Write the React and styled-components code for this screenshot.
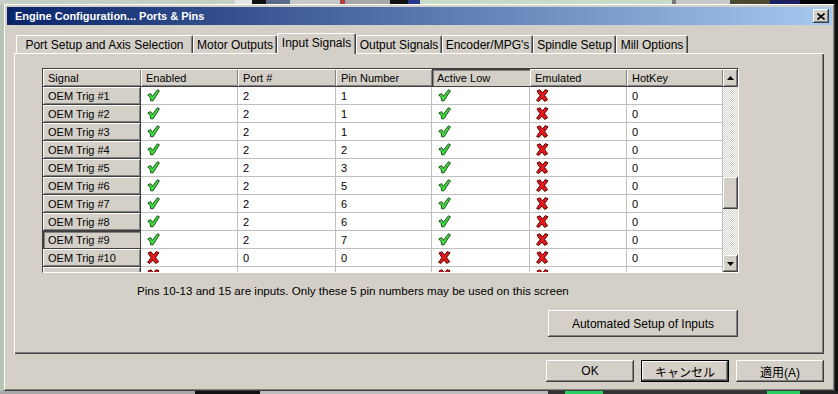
import React from 'react';
import styled, { createGlobalStyle, css } from 'styled-components';

const face = '#d4d0c8';
const shadow = '#808080';
const darkShadow = '#404040';
const gridLine = '#c0c0c0';

const GlobalStyle = createGlobalStyle`
  html, body { margin: 0; padding: 0; }
  body {
    width: 838px;
    height: 394px;
    overflow: hidden;
    font-family: "Liberation Sans", "Noto Sans CJK JP", sans-serif;
    font-size: 11px;
    color: #000;
    background:
      linear-gradient(to right, #c4d0c4 0 235px, #e6e6e6 235px 252px, #111 252px 266px, #5a6a8a 266px 290px, #c8c8c8 290px 340px, #b04040 340px 345px, #a8a8a8 345px 390px, #111 390px 408px, #2a3a8a 408px 420px, #c6dcc6 420px 672px, #777 672px 676px, #c8c8c8 676px 730px, #4a4a30 730px 770px, #1c2060 770px 800px, #000 800px) top / 100% 4px no-repeat,
      linear-gradient(to right, #a8a8a8 0 195px, #111 195px 260px, #bdbdbd 260px 548px, #333 548px 565px, #2ad060 565px 603px, #333 603px 767px, #2ad060 767px 800px, #222 800px) bottom / 100% 3px no-repeat,
      linear-gradient(to right, #b8c4b8 0 835px, #101010 835px);
  }
`;

const raised = css`
  box-shadow: inset -1px -1px ${darkShadow}, inset 1px 1px #fff, inset -2px -2px ${shadow};
`;

const Window = styled.div`
  box-sizing: border-box;
  width: 831px;
  height: 387px;
  margin: 4px 0 0 4px;
  padding: 3px;
  background: ${face};
  display: flex;
  flex-direction: column;
  ${raised};
`;

const TitleBar = styled.div`
  height: 18px;
  display: flex;
  align-items: center;
  justify-content: space-between;
  padding: 0 3px 0 8px;
  background: linear-gradient(to right, #0a246a, #a6caf0);
  color: #fff;
  font-weight: bold;
  font-size: 11px;
`;

const CloseButton = styled.div`
  width: 16px;
  height: 14px;
  display: flex;
  align-items: center;
  justify-content: center;
  background: ${face};
  ${raised};
`;

const Body = styled.div`
  flex: 1;
  display: flex;
  flex-direction: column;
  padding: 0 8px 0 7px;
`;

const TabStrip = styled.div`
  display: flex;
  align-items: flex-end;
  height: 20px;
  margin-top: 8px;
  padding-left: 2px;
`;

const Tab = styled.div`
  box-sizing: border-box;
  width: ${p => p.w}px;
  height: ${p => (p.active ? 21 : 18)}px;
  margin-bottom: ${p => (p.active ? -1 : 0)}px;
  display: flex;
  align-items: center;
  justify-content: center;
  padding-bottom: ${p => (p.active ? 3 : 0)}px;
  font-size: 12px;
  white-space: nowrap;
  background: ${face};
  border-radius: 2px 2px 0 0;
  border-top: 1px solid #fff;
  border-left: 1px solid #fff;
  border-right: 1px solid ${darkShadow};
  box-shadow: inset -1px 0 ${shadow};
  position: relative;
  z-index: ${p => (p.active ? 2 : 0)};
`;

const Panel = styled.div`
  box-sizing: border-box;
  height: 301px;
  padding: 15px 0 0 28px;
  display: flex;
  flex-direction: column;
  box-shadow: inset 1px 1px #fff, inset -1px -1px ${darkShadow}, inset -2px -2px ${shadow};
`;

const GridBox = styled.div`
  box-sizing: border-box;
  width: 697px;
  height: 205px;
  display: flex;
  border-top: 1px solid ${darkShadow};
  border-left: 1px solid ${darkShadow};
  border-right: 1px solid #fff;
  border-bottom: 1px solid #fff;
`;

const Table = styled.div`
  width: 680px;
  display: flex;
  flex-direction: column;
`;

const TableBody = styled.div`
  height: 185px;
  overflow: hidden;
  background: #fff;
`;

const Row = styled.div`
  display: grid;
  grid-template-columns: 98px 97px 98px 96px 98px 97px 96px;
  height: 18px;
`;

const HeaderCell = styled.div`
  display: flex;
  align-items: center;
  padding-left: 5px;
  background: ${face};
  box-shadow: ${p => (p.pressed
    ? `inset 1px 1px ${darkShadow}, inset 2px 2px ${shadow}`
    : `inset 1px 1px #fff, inset -1px -1px ${shadow}`)};
  border-right: 1px solid ${darkShadow};
  border-bottom: 1px solid ${darkShadow};
  margin-right: -1px;
`;

const RowHead = styled.div`
  display: flex;
  align-items: center;
  padding-left: 5px;
  background: ${face};
  box-shadow: ${p => (p.pressed
    ? `inset 1px 1px ${darkShadow}, inset 2px 2px ${shadow}`
    : `inset 1px 1px #fff, inset -1px -1px ${shadow}`)};
  border-right: 1px solid ${darkShadow};
  border-bottom: 1px solid ${darkShadow};
`;

const Cell = styled.div`
  display: flex;
  align-items: center;
  padding-left: ${p => (p.icon ? 6 : 5)}px;
  border-right: 1px solid ${gridLine};
  border-bottom: 1px solid ${gridLine};
`;

const ScrollBar = styled.div`
  width: 17px;
  display: flex;
  flex-direction: column;
`;

const ArrowButton = styled.div`
  box-sizing: border-box;
  height: ${p => p.h}px;
  display: flex;
  align-items: center;
  justify-content: center;
  background: ${face};
  ${raised};
`;

const Track = styled.div`
  flex: 1;
  background: repeating-conic-gradient(${face} 0 25%, #fff 0 50%) 0 0 / 2px 2px;
  padding-top: 90px;
`;

const Thumb = styled.div`
  height: 32px;
  background: ${face};
  ${raised};
`;

const Note = styled.div`
  margin: 11px 0 0 95px;
  font-size: 11.6px;
  line-height: 14px;
`;

const Button = styled.div`
  box-sizing: border-box;
  width: ${p => p.w}px;
  height: ${p => p.h}px;
  display: flex;
  align-items: center;
  justify-content: center;
  font-size: 12px;
  background: ${face};
  ${raised};
  ${p => p.isDefault && css`
    border: 1px solid #000;
  `}
`;

const AutoButton = styled(Button)`
  margin: 12px 0 0 506px;
`;

const ButtonRow = styled.div`
  display: flex;
  justify-content: flex-end;
  gap: 7px;
  margin-top: 6px;
`;

const Check = () => (
  <svg width="13" height="13" viewBox="0 0 13 13">
    <polygon
      points="0.8,6 3.6,4.6 5.4,7.4 10.4,0.8 12.4,1.8 6,11.8 3.6,11.8 3.2,8.6"
      fill="#3ce03c"
      stroke="#1d4f1d"
      strokeWidth="1"
      strokeLinejoin="round"
    />
  </svg>
);

const Cross = () => (
  <svg width="13" height="13" viewBox="0 0 13 13">
    <polygon
      points="1,2 4,0.8 6.5,4 9.2,0.6 12,1.8 8.6,6.4 11.6,10.8 8.6,12.4 6,9 3,12.4 0.6,11.4 4,6.6"
      fill="#e01a1a"
      stroke="#5e0000"
      strokeWidth="1"
      strokeLinejoin="round"
    />
  </svg>
);

const Flag = ({ on }) => (on ? <Check /> : <Cross />);

const tabs = [
  { label: 'Port Setup and Axis Selection', w: 177 },
  { label: 'Motor Outputs', w: 84 },
  { label: 'Input Signals', w: 79, active: true },
  { label: 'Output Signals', w: 86 },
  { label: "Encoder/MPG's", w: 91 },
  { label: 'Spindle Setup', w: 83 },
  { label: 'Mill Options', w: 72 },
];

const columns = ['Signal', 'Enabled', 'Port #', 'Pin Number', 'Active Low', 'Emulated', 'HotKey'];

const signals = [
  { enabled: true, port: 2, pin: 1, low: true },
  { enabled: true, port: 2, pin: 1, low: true },
  { enabled: true, port: 2, pin: 1, low: true },
  { enabled: true, port: 2, pin: 2, low: true },
  { enabled: true, port: 2, pin: 3, low: true },
  { enabled: true, port: 2, pin: 5, low: true },
  { enabled: true, port: 2, pin: 6, low: true },
  { enabled: true, port: 2, pin: 6, low: true },
  { enabled: true, port: 2, pin: 7, low: true },
  { enabled: false, port: 0, pin: 0, low: false },
  { enabled: false, port: 0, pin: 0, low: false },
].map((s, i) => ({ ...s, name: `OEM Trig #${i + 1}`, emulated: false, hotkey: 0 }));

const App = () => (
  <>
    <GlobalStyle />
    <Window>
      <TitleBar>
        <span>Engine Configuration... Ports &amp; Pins</span>
        <CloseButton>
          <svg width="8" height="7" viewBox="0 0 8 7">
            <path d="M0.5 0.5 L7.5 6.5 M7.5 0.5 L0.5 6.5" stroke="#000" strokeWidth="1.6" />
          </svg>
        </CloseButton>
      </TitleBar>
      <Body>
        <TabStrip>
          {tabs.map(t => (
            <Tab key={t.label} w={t.w} active={t.active}>{t.label}</Tab>
          ))}
        </TabStrip>
        <Panel>
          <GridBox>
            <Table>
              <Row>
                {columns.map(c => (
                  <HeaderCell key={c} pressed={c === 'Active Low'}>{c}</HeaderCell>
                ))}
              </Row>
              <TableBody>
                {signals.map((s, i) => (
                  <Row key={s.name}>
                    <RowHead pressed={i === 8}>{s.name}</RowHead>
                    <Cell icon><Flag on={s.enabled} /></Cell>
                    <Cell>{s.port}</Cell>
                    <Cell>{s.pin}</Cell>
                    <Cell icon><Flag on={s.low} /></Cell>
                    <Cell icon><Flag on={s.emulated} /></Cell>
                    <Cell>{s.hotkey}</Cell>
                  </Row>
                ))}
              </TableBody>
            </Table>
            <ScrollBar>
              <ArrowButton h={18}>
                <svg width="7" height="4" viewBox="0 0 7 4"><polygon points="3.5,0 7,4 0,4" fill="#000" /></svg>
              </ArrowButton>
              <Track>
                <Thumb />
              </Track>
              <ArrowButton h={17}>
                <svg width="7" height="4" viewBox="0 0 7 4"><polygon points="0,0 7,0 3.5,4" fill="#000" /></svg>
              </ArrowButton>
            </ScrollBar>
          </GridBox>
          <Note>Pins 10-13 and 15 are inputs. Only these 5 pin numbers may be used on this screen</Note>
          <AutoButton w={190} h={27}>Automated Setup of Inputs</AutoButton>
        </Panel>
        <ButtonRow>
          <Button w={88} h={22}>OK</Button>
          <Button w={88} h={22} isDefault>キャンセル</Button>
          <Button w={88} h={22}>適用(A)</Button>
        </ButtonRow>
      </Body>
    </Window>
  </>
);

export default App;
